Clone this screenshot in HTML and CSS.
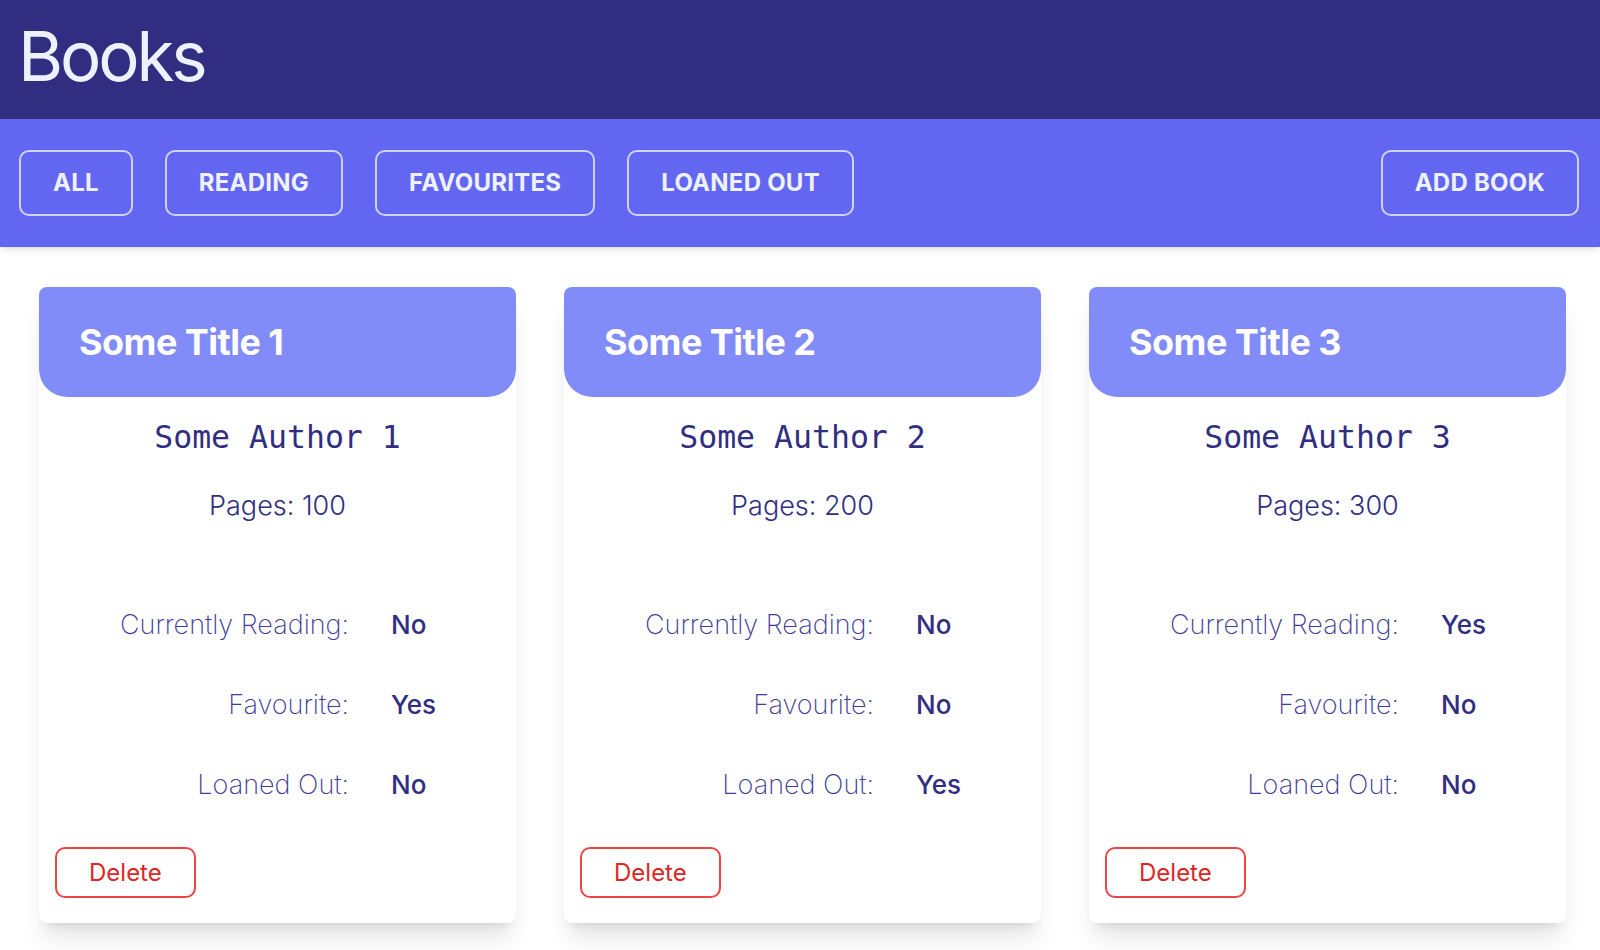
FILE: index.html
```html
<!DOCTYPE html>
<html lang="en">
<head>
<meta charset="utf-8">
<title>Books</title>
<link rel="stylesheet" href="styles.css">
</head>
<body>
<header class="topbar">
  <h1 class="brand">Books</h1>
</header>
<nav class="navbar">
  <button class="nav-btn">ALL</button>
  <button class="nav-btn">READING</button>
  <button class="nav-btn">FAVOURITES</button>
  <button class="nav-btn">LOANED OUT</button>
  <button class="nav-btn nav-add">ADD BOOK</button>
</nav>
<main class="shelf">
  <article class="card">
    <div class="card-head"><h2 class="card-title">Some Title 1</h2></div>
    <p class="author">Some Author 1</p>
    <p class="pages">Pages: 100</p>
    <dl class="facts">
      <dt>Currently Reading:</dt><dd>No</dd>
      <dt>Favourite:</dt><dd>Yes</dd>
      <dt>Loaned Out:</dt><dd>No</dd>
    </dl>
    <div class="card-foot"><button class="delete-btn">Delete</button></div>
  </article>
  <article class="card">
    <div class="card-head"><h2 class="card-title">Some Title 2</h2></div>
    <p class="author">Some Author 2</p>
    <p class="pages">Pages: 200</p>
    <dl class="facts">
      <dt>Currently Reading:</dt><dd>No</dd>
      <dt>Favourite:</dt><dd>No</dd>
      <dt>Loaned Out:</dt><dd>Yes</dd>
    </dl>
    <div class="card-foot"><button class="delete-btn">Delete</button></div>
  </article>
  <article class="card">
    <div class="card-head"><h2 class="card-title">Some Title 3</h2></div>
    <p class="author">Some Author 3</p>
    <p class="pages">Pages: 300</p>
    <dl class="facts">
      <dt>Currently Reading:</dt><dd>Yes</dd>
      <dt>Favourite:</dt><dd>No</dd>
      <dt>Loaned Out:</dt><dd>No</dd>
    </dl>
    <div class="card-foot"><button class="delete-btn">Delete</button></div>
  </article>
</main>
</body>
</html>
```
FILE: styles.css
```css
* { box-sizing: border-box; }

body {
  margin: 0;
  font-family: Inter, "Noto Sans", sans-serif;
  background: #ffffff;
  color: #312e81;
}

.topbar {
  background: #312e81;
  height: 119px;
  display: flex;
  align-items: center;
  padding: 0 0 6px 18px;
}

.brand {
  margin: 0;
  font-size: 69px;
  line-height: 1;
  font-weight: 400;
  letter-spacing: -0.045em;
  color: #eef2ff;
}

.navbar {
  background: #6366f1;
  display: flex;
  gap: 32px;
  padding: 31px 21px 31px 19px;
  box-shadow: 0 4px 8px -2px rgba(0, 0, 0, 0.12), 0 2px 4px -2px rgba(0, 0, 0, 0.08);
  position: relative;
}

.nav-btn {
  font-family: Inter, "Noto Sans", sans-serif;
  font-size: 24px;
  line-height: 32px;
  font-weight: 700;
  color: #eef2ff;
  background: transparent;
  border: 2px solid rgba(224, 231, 255, 0.85);
  border-radius: 10px;
  padding: 15px 32px;
  letter-spacing: 0.01em;
}

.nav-add { margin-left: auto; }

.shelf {
  display: grid;
  grid-template-columns: repeat(3, 477px);
  column-gap: 48px;
  padding: 40px 0 40px 39px;
}

.card {
  background: #ffffff;
  border-radius: 8px;
  height: 636px;
  display: flex;
  flex-direction: column;
  box-shadow: 0 20px 25px -5px rgba(0, 0, 0, 0.1), 0 8px 10px -6px rgba(0, 0, 0, 0.1);
}

.card-head {
  background: #818cf8;
  height: 110px;
  border-radius: 8px 8px 28px 28px;
  display: flex;
  align-items: center;
  padding: 0 40px;
}

.card-title {
  margin: 0;
  color: #ffffff;
  font-size: 36px;
  line-height: 40px;
  font-weight: 700;
  letter-spacing: -0.015em;
}

.author {
  margin: 20px 0 0;
  text-align: center;
  font-family: "DejaVu Sans Mono", "Liberation Mono", monospace;
  font-size: 31.5px;
  line-height: 40px;
  color: #312e81;
}

.pages {
  margin: 33px 0 0;
  text-align: center;
  font-size: 27px;
  line-height: 32px;
  font-weight: 300;
  color: #312e81;
}

.facts {
  margin: 87px 0 0;
  display: grid;
  grid-template-columns: 310px 1fr;
  column-gap: 42px;
  row-gap: 48px;
  font-size: 27px;
  line-height: 32px;
}

.facts dt {
  text-align: right;
  font-weight: 200;
  color: #3f3b96;
}

.facts dd {
  margin: 0;
  font-size: 26px;
  font-weight: 500;
  color: #312e81;
}

.card-foot {
  margin-top: auto;
  padding: 0 0 25px 16px;
}

.delete-btn {
  font-family: Inter, "Noto Sans", sans-serif;
  font-size: 24px;
  line-height: 31px;
  font-weight: 400;
  color: #dc2626;
  background: #ffffff;
  border: 2px solid #ef4444;
  border-radius: 10px;
  padding: 8px 32px;
}
```
